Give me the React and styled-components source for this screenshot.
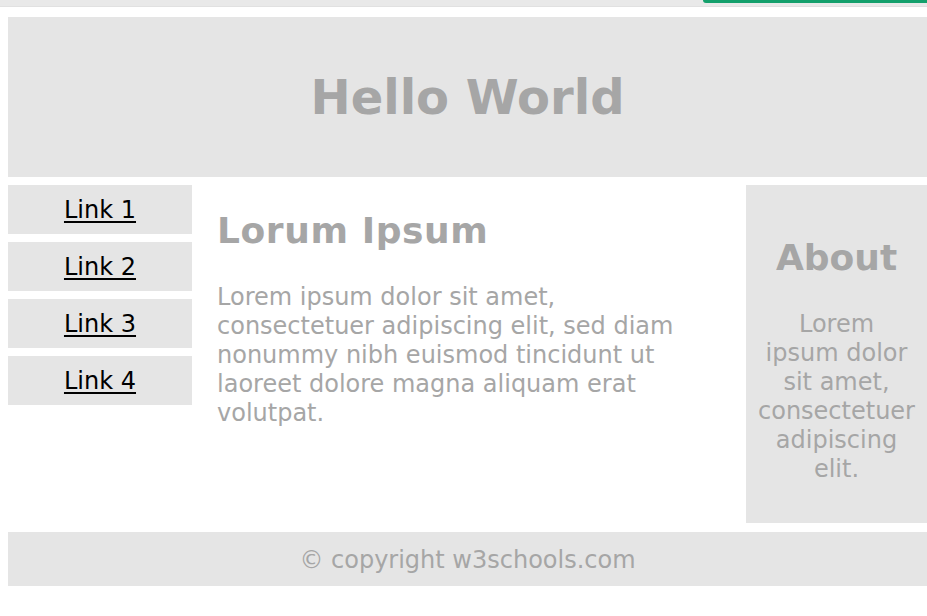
import styled, { createGlobalStyle } from "styled-components";

const GlobalStyle = createGlobalStyle`
  body {
    margin: 0;
    font-family: "DejaVu Sans", Verdana, sans-serif;
    background: #fff;
    overflow: hidden;
  }
`;

const TopStrip = styled.div`
  display: flex;
  justify-content: flex-end;
  height: 6px;
  background: #e9e9e9;
  border-bottom: 1px solid #e1e1e1;
`;

const GreenTab = styled.div`
  width: 224px;
  height: 3px;
  background: #14a06c;
  border-bottom-left-radius: 6px;
`;

const Page = styled.div`
  padding: 10px 0 0 8px;
`;

const Header = styled.header`
  display: flex;
  align-items: center;
  justify-content: center;
  height: 160px;
  background: #e5e5e5;

  h1 {
    margin: 0;
    font-size: 48px;
    font-weight: bold;
    color: #a6a6a6;
  }
`;

const Row = styled.div`
  display: flex;
  gap: 8px;
  margin-top: 8px;
  align-items: flex-start;
`;

const Nav = styled.nav`
  display: flex;
  flex-direction: column;
  gap: 8px;
  width: 184px;
  flex-shrink: 0;
`;

const NavItem = styled.a`
  display: flex;
  align-items: center;
  justify-content: center;
  height: 49px;
  background: #e5e5e5;
  color: #000;
  font-size: 24px;
  text-decoration: underline;
  text-underline-offset: 3px;
`;

const Main = styled.main`
  flex: 1;
  padding: 25px 40px 0 17px;
  color: #a6a6a6;

  h2 {
    margin: 0 0 32px;
    font-size: 36px;
    font-weight: bold;
    letter-spacing: 0.6px;
  }

  p {
    margin: 0;
    font-size: 24px;
    line-height: 29px;
  }
`;

const Aside = styled.aside`
  width: 181px;
  flex-shrink: 0;
  height: 338px;
  box-sizing: border-box;
  padding: 52px 0 0;
  background: #e5e5e5;
  color: #a6a6a6;
  text-align: center;

  h2 {
    margin: 0 0 32px;
    font-size: 36px;
    font-weight: bold;
  }

  p {
    margin: 0;
    font-size: 24px;
    line-height: 29px;
  }
`;

const Footer = styled.footer`
  display: flex;
  align-items: center;
  justify-content: center;
  height: 54px;
  margin-top: 9px;
  padding-top: 2px;
  box-sizing: border-box;
  background: #e5e5e5;
  color: #a6a6a6;
  font-size: 24px;
`;

const links = ["Link 1", "Link 2", "Link 3", "Link 4"];

const App = () => {
  return (
    <>
      <GlobalStyle />
      <TopStrip>
        <GreenTab />
      </TopStrip>
      <Page>
        <Header>
          <h1>Hello World</h1>
        </Header>
        <Row>
          <Nav>
            {links.map((l) => (
              <NavItem key={l} href="#">
                {l}
              </NavItem>
            ))}
          </Nav>
          <Main>
            <h2>Lorum Ipsum</h2>
            <p>
              Lorem ipsum dolor sit amet, consectetuer adipiscing elit, sed
              diam nonummy nibh euismod tincidunt ut laoreet dolore magna
              aliquam erat volutpat.
            </p>
          </Main>
          <Aside>
            <h2>About</h2>
            <p>
              Lorem
              <br />
              ipsum dolor
              <br />
              sit amet,
              <br />
              consectetuer
              <br />
              adipiscing
              <br />
              elit.
            </p>
          </Aside>
        </Row>
        <Footer>© copyright w3schools.com</Footer>
      </Page>
    </>
  );
};

export default App;
